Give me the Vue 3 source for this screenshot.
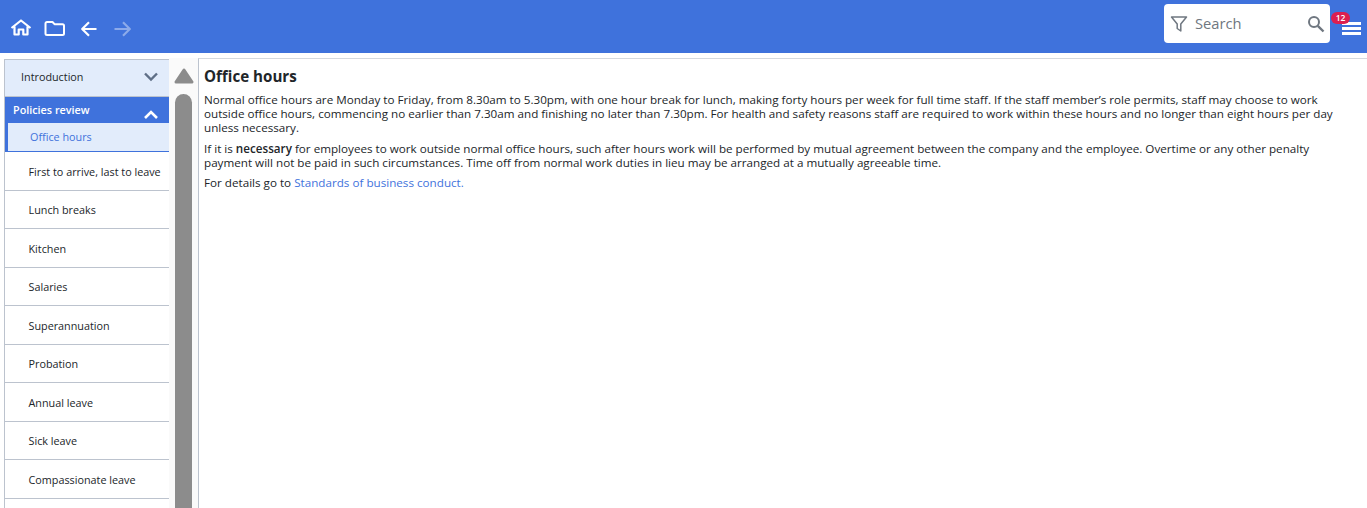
<script setup>
const items = ['First to arrive, last to leave','Lunch breaks','Kitchen','Salaries','Superannuation','Probation','Annual leave','Sick leave','Compassionate leave']
</script>

<template>
  <div class="app">
    <header class="bar">
      <div class="tools">
        <svg width="22" height="22" viewBox="0 0 22 22" fill="none" stroke="#fff" stroke-width="2.200" stroke-linejoin="round"><path d="M1.500 11 11 3.500 20.500 11M4.500 9.500V17.500h4.200v-5h4.600v5h4.200V9.500"/></svg>
        <svg width="22" height="22" viewBox="0 0 22 22" fill="none" stroke="#fff" stroke-width="2" stroke-linejoin="round"><path d="M1.500 6.500a1.500 1.500 0 0 1 1.500-1.500h5.500l2 2.200H18.500a1.500 1.500 0 0 1 1.500 1.500V16.500a1.500 1.500 0 0 1-1.500 1.500H3a1.500 1.500 0 0 1-1.500-1.500z"/></svg>
        <svg width="22" height="22" viewBox="0 0 22 22" fill="none" stroke="#fff" stroke-width="2.200" stroke-linejoin="round"><path d="M18.500 12H4.500M11 5.300 4.200 12l6.800 6.700"/></svg>
        <svg class="off" width="22" height="22" viewBox="0 0 22 22" fill="none" stroke="#fff" stroke-width="2.200" stroke-linejoin="round"><path d="M2.500 12h14.500M11 5.300 17.800 12 11 18.700"/></svg>
      </div>
      <div class="right">
        <div class="search">
          <svg width="18" height="18" viewBox="0 0 18 18" fill="none" stroke="#6f7780" stroke-width="1.500" stroke-linejoin="round"><path d="M1.500 2h15l-5.700 7v7l-3.600-2.500V9z"/></svg>
          <span class="ph">Search</span>
          <svg width="18" height="18" viewBox="0 0 18 18" fill="none" stroke="#6f7780"><circle cx="7" cy="7" r="5" stroke-width="2"/><path d="m10.800 10.800 5.700 5.700" stroke-width="2.400"/></svg>
        </div>
        <div class="menu">
          <span class="badge">12</span>
          <i></i><i></i><i></i>
        </div>
      </div>
    </header>
    <div class="main">
      <aside class="side">
        <div class="intro">
          <span class="intro-label">Introduction</span>
          <svg width="16" height="10" viewBox="0 0 16 10" fill="none" stroke="#5f6f86" stroke-width="2.400"><path d="m2 1.500 6 6 6-6"/></svg>
        </div>
        <div class="sec">
          <span>Policies review</span>
          <svg width="16" height="10" viewBox="0 0 16 10" fill="none" stroke="#fff" stroke-width="2.600"><path d="m2 8 6-6 6 6"/></svg>
        </div>
        <div class="active">Office hours</div>
        <div v-for="i in items" :key="i" class="item">{{ i }}</div>
      </aside>
      <div class="scroll">
        <svg class="arrow" width="20" height="16" viewBox="0 0 20 16"><path d="M10 2 18 14H2z" fill="#8c8c8c" stroke="#8c8c8c" stroke-width="3" stroke-linejoin="round"/></svg>
        <div class="thumb"></div>
      </div>
      <main class="content">
        <h1>Office hours</h1>
        <p>Normal office hours are Monday to Friday, from 8.30am to 5.30pm, with one hour break for lunch, making forty hours per week for full time staff. If the staff member’s role permits, staff may choose to work outside office hours, commencing no earlier than 7.30am and finishing no later than 7.30pm. For health and safety reasons staff are required to work within these hours and no longer than eight hours per day unless necessary.</p>
        <p>If it is <b>necessary</b> for employees to work outside normal office hours, such after hours work will be performed by mutual agreement between the company and the employee. Overtime or any other penalty payment will not be paid in such circumstances. Time off from normal work duties in lieu may be arranged at a mutually agreeable time.</p>
        <p>For details go to <a>Standards of business conduct.</a></p>
      </main>
    </div>
  </div>
</template>

<style>
html, body { margin: 0; overflow: hidden; background: #fff; }
</style>

<style scoped>
.app { width: 1367px; height: 508px; overflow: hidden; font-family: "Open Sans", "Noto Sans", sans-serif; color: #212529; display: flex; flex-direction: column; }
.bar { height: 53px; flex: none; background: #3f72dc; display: flex; justify-content: space-between; align-items: flex-start; }
.tools { display: flex; gap: 12px; padding-left: 10px; margin-top: 17px; }
.off { opacity: .4; }
.right { display: flex; align-items: flex-start; margin-top: 4px; }
.search { width: 166px; height: 39px; box-sizing: border-box; background: #fff; border-radius: 4px; display: flex; align-items: center; padding: 0 5px 0 6px; }
.search svg { margin-top: 1px; }
.ph { margin-left: 7px; font-size: 14.700px; color: #6f7780; flex: 1; margin-top: -1px; }
.menu { width: 37px; height: 39px; position: relative; display: flex; flex-direction: column; gap: 2px; align-items: flex-end; padding: 18px 6px 0 0; box-sizing: border-box; }
.menu i { display: block; width: 19px; height: 3px; background: #fff; }
.badge { position: absolute; left: 1px; top: 8px; width: 19px; height: 12px; border-radius: 6px; background: #dc1e50; color: #fff; font-size: 8.500px; font-weight: 600; line-height: 12px; text-align: center; }
.main { flex: 1; display: flex; min-height: 0; padding-top: 5px; }
.side { width: 165px; margin: 1px 0 0 4px; flex: none; border-left: 1px solid #bcc3ce; box-sizing: border-box; height: 454px; overflow: hidden; font-size: 10.800px; }
.intro { height: 38px; box-sizing: border-box; background: #e2ecfb; border-top: 1px solid #bcc3ce; border-bottom: 1px solid #bcc3ce; display: flex; align-items: center; justify-content: space-between; padding: 0 10px 2px 16px; }
.intro-label { margin-top: -1px; }
.sec { height: 26px; box-sizing: border-box; background: #3f72dc; color: #fff; font-weight: 600; display: flex; justify-content: space-between; align-items: center; padding: 0 10px 0 8px; }
.sec svg { margin-top: 9px; }
.sec span { margin-top: -1px; }
.active { height: 29.400px; box-sizing: border-box; background: #e2ecfb; color: #3f72dc; border-left: 3px solid #3f72dc; border-bottom: 1px solid #3f72dc; padding-left: 22px; line-height: 27.500px; }
.item { height: 38.500px; box-sizing: border-box; border-bottom: 1px solid #bcc3ce; padding-left: 23.500px; display: flex; align-items: center; }
.scroll { width: 29px; flex: none; display: flex; flex-direction: column; align-items: center; background: #fafafa; }
.arrow { margin-top: 9.500px; flex: none; }
.thumb { width: 17px; height: 420px; margin-top: 10px; background: #8c8c8c; border-radius: 9px 9px 0 0; flex: none; }
.content { flex: 1; border-left: 1px solid #bcc3ce; border-top: 1px solid #d5d9df; padding: 7px 30px 0 5px; font-size: 11.660px; line-height: 14px; }
h1 { margin: 0 0 7px; font-size: 15.150px; line-height: 20px; font-weight: 700; }
p { margin: 0 0 6.500px; }
b { font-weight: 600; }
a { color: #3f72dc; }
</style>
